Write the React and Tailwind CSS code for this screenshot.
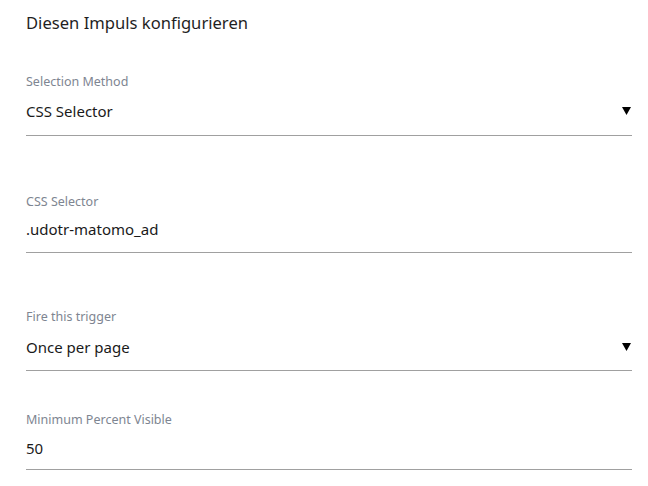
function Caret() {
  return (
    <svg width="9" height="8" viewBox="0 0 9 8" className="mr-[1px]">
      <polygon points="0,0 9,0 4.5,8" fill="#000" />
    </svg>
  );
}

function Field({ label, value, select, className, labelGap, bottomPad }) {
  return (
    <div className={className}>
      <div className="text-[12.5px] leading-4 text-[#7e8591]">{label}</div>
      <div className={`flex items-center justify-between border-b border-[#a0a0a0] ${labelGap} ${bottomPad}`}>
        <span className="text-[15px] leading-6 text-[#1a1a1a]">{value}</span>
        {select && <Caret />}
      </div>
    </div>
  );
}

export default function App() {
  return (
    <div className="min-h-screen bg-white px-[26px] pt-[11px] font-['Segoe_UI','Noto_Sans',sans-serif]">
      <div className="w-[606px]">
        <h2 className="text-[16.6px] leading-6 text-[#1f1f1f]">Diesen Impuls konfigurieren</h2>
        <Field className="mt-[39px]" labelGap="mt-[9px]" bottomPad="pb-[12px]" label="Selection Method" value="CSS Selector" select />
        <Field className="mt-[58px]" labelGap="mt-[7px]" bottomPad="pb-[11px]" label="CSS Selector" value=".udotr-matomo_ad" />
        <Field className="mt-[56px]" labelGap="mt-[10px]" bottomPad="pb-[11px]" label="Fire this trigger" value="Once per page" select />
        <Field className="mt-[41px]" labelGap="mt-[8px]" bottomPad="pb-[9px]" label="Minimum Percent Visible" value="50" />
      </div>
    </div>
  );
}
